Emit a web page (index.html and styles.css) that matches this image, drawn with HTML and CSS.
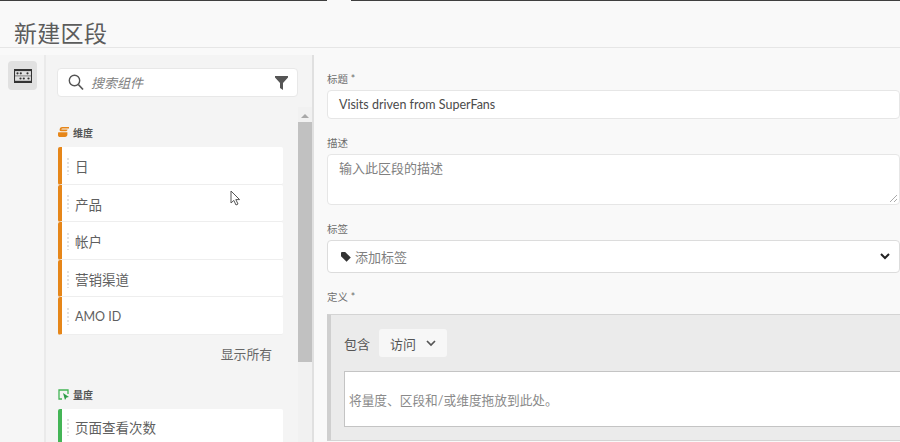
FILE: index.html
```html
<!DOCTYPE html>
<html lang="zh-CN">
<head>
  <meta charset="UTF-8">
  <title>新建区段</title>
  <meta name="viewport" content="width=device-width, initial-scale=1.0">
  <link rel="stylesheet" href="styles.css">
</head>
<body>

  <div class="topline"><span class="topline-gap"></span></div>

  <h1 class="page-title">新建区段</h1>

  <div class="main">

    <div class="rail">
      <div class="rail-btn">
        <svg width="18" height="14" viewBox="0 0 18 14">
          <rect x="0.5" y="0.5" width="17" height="13" fill="none" stroke="#333" stroke-width="1.1"/>
          <path d="M1 1.5H17" stroke="#333" stroke-width="1.2"/>
          <path d="M1 6.9H17" stroke="#555" stroke-width="0.7"/>
          <path d="M1 12.4H17" stroke="#333" stroke-width="1.2"/>
          <circle cx="3.5" cy="4.3" r="1.1" fill="#333"/>
          <circle cx="6.8" cy="4.3" r="1.1" fill="#333"/>
          <circle cx="13.5" cy="4.3" r="1.1" fill="#333"/>
          <circle cx="6.5" cy="9.5" r="1.1" fill="#333"/>
          <circle cx="9.8" cy="9.5" r="1.1" fill="#333"/>
          <circle cx="14.5" cy="9.5" r="1.1" fill="#333"/>
        </svg>
      </div>
    </div>

    <div class="panel">
      <div class="search">
        <svg class="search-icon" width="16" height="17" viewBox="0 0 16 17">
          <circle cx="6.5" cy="6.5" r="5.2" fill="none" stroke="#555" stroke-width="1.4"/>
          <path d="M10.3 10.5L15 15.5" stroke="#555" stroke-width="1.7"/>
        </svg>
        <span class="search-text">搜索组件</span>
        <svg class="filter-icon" width="13" height="14" viewBox="0 0 13 14">
          <path d="M0 0H13V1.5L8 7V14L5 12V7L0 1.5Z" fill="#555"/>
        </svg>
      </div>

      <div class="panel-body">
        <div class="list">
          <div class="group-label first">
            <svg width="11" height="10" viewBox="0 0 11 10">
              <path d="M4 0H11V1.4H4.5C3.8 1.4 3.4 1.8 3.3 2.4H9.6C9.4 3.6 8.6 4.2 7.4 4.2H3C1.6 4.2 1.4 3.2 1.8 1.8 2.1 .7 2.9 0 4 0Z" fill="#e68619"/>
              <path d="M1 5.2H9.4V7.6C9.4 9.2 8.4 10 7 10H2C.8 10 0 9.2 0 8.2V6.2C0 5.6.4 5.2 1 5.2Z" fill="#e68619"/>
            </svg>
            维度
          </div>
          <div class="cards">
            <div class="card orange"><span class="grip"></span>日</div>
            <div class="card orange"><span class="grip"></span>产品</div>
            <div class="card orange"><span class="grip"></span>帐户</div>
            <div class="card orange"><span class="grip"></span>营销渠道</div>
            <div class="card orange card-latin"><span class="grip"></span>AMO ID</div>
          </div>
          <div class="show-all">显示所有</div>
          <div class="group-label">
            <svg width="11" height="11" viewBox="0 0 11 11">
              <path d="M10 5V1H1V10H4" fill="none" stroke="#44b556" stroke-width="1.3"/>
              <path d="M5 4L11 8L8.5 8.5L7 11Z" fill="#2d9d48"/>
            </svg>
            量度
          </div>
          <div class="cards">
            <div class="card green"><span class="grip"></span>页面查看次数</div>
          </div>
        </div>

        <div class="scrollbar">
          <div class="scroll-arrow"></div>
          <div class="scroll-thumb"></div>
        </div>
      </div>

      <svg class="cursor" width="11" height="16" viewBox="0 0 11 16">
        <path d="M1 1V13L3.8 10.4L6 15L8 14L5.8 9.6H9.6Z" fill="#fff" stroke="#555" stroke-width="1"/>
      </svg>
    </div>

    <div class="form">
      <div class="label">标题 *</div>
      <div class="input title-input">Visits driven from SuperFans</div>

      <div class="label">描述</div>
      <div class="input desc-input">
        输入此区段的描述
        <svg class="resize" width="9" height="9" viewBox="0 0 9 9">
          <path d="M1 8L8 1M5 8L8 5" stroke="#aaa" stroke-width="1"/>
        </svg>
      </div>

      <div class="label">标签</div>
      <div class="input tag-input">
        <svg width="10" height="10" viewBox="0 0 10 10">
          <path d="M0 1V4.2L5.6 9.8L9.8 5.6L4.2 0H1Q0 0 0 1Z" fill="#333"/>
        </svg>
        <span>添加标签</span>
        <svg class="tag-chevron" width="10" height="7" viewBox="0 0 10 7">
          <path d="M1 1L5 5L9 1" fill="none" stroke="#222" stroke-width="2"/>
        </svg>
      </div>

      <div class="label label-def">定义 *</div>
      <div class="definition">
        <div class="def-head">
          包含
          <div class="def-select">
            访问
            <svg width="10" height="7" viewBox="0 0 10 7">
              <path d="M1 1L5 5L9 1" fill="none" stroke="#555" stroke-width="1.7"/>
            </svg>
          </div>
        </div>
        <div class="dropzone">将量度、区段和/或维度拖放到此处。</div>
      </div>
    </div>

  </div>

</body>
</html>
```

FILE: styles.css
```css
* {
  box-sizing: border-box;
}

html, body {
  height: 442px;
  margin: 0;
  overflow: hidden;
}

body {
  background: #f9f9f9;
  color: #4b4b4b;
  font-family: Lato, "Noto Sans CJK SC", sans-serif;
  font-size: 14px;
}

.topline {
  height: 1px;
  background: #3f3f3f;
  padding-left: 327px;
}

.topline-gap {
  display: block;
  width: 24px;
  height: 1px;
  background: #f9f9f9;
}

.page-title {
  height: 47px;
  margin: 0;
  padding: 16px 0 0 14px;
  border-bottom: 1px solid #e6e6e6;
  font-size: 23px;
  font-weight: 400;
  line-height: 32px;
  letter-spacing: 0.3px;
  color: #5c5c5c;
}

.main {
  display: flex;
  height: 394px;
  padding-top: 7px;
}

.rail {
  width: 46px;
  padding: 6px 0 0 8px;
  background: #f6f6f6;
  border-right: 2px solid #eaeaea;
}

.rail-btn {
  display: flex;
  align-items: center;
  justify-content: center;
  width: 29px;
  height: 29px;
  background: #e1e1e1;
  border-radius: 4px;
}

.panel {
  position: relative;
  width: 268px;
  padding-top: 13px;
  overflow: hidden;
  background: #f4f4f4;
  border-right: 2px solid #e0e0e0;
}

.search {
  display: flex;
  align-items: center;
  width: 241px;
  height: 29px;
  margin-left: 11px;
  padding: 0 9px 0 10px;
  background: #fff;
  border: 1px solid #e8e8e8;
  border-radius: 4px;
}

.search-text {
  flex: 1;
  margin-left: 7px;
  font-size: 13px;
  line-height: 18px;
  font-style: italic;
  color: #808080;
}

.panel-body {
  display: flex;
  margin-top: 10px;
}

.list {
  width: 252px;
  padding: 18px 0 0 12px;
}

.group-label {
  display: flex;
  align-items: center;
  gap: 4px;
  height: 14px;
  margin-top: 25px;
  font-size: 10px;
  font-weight: 700;
  color: #555;
}

.group-label.first {
  margin-top: 0;
  margin-bottom: 8px;
}

.cards {
  width: 225px;
  margin-top: 7px;
}

.group-label.first + .cards {
  margin-top: 0;
}

.card {
  display: flex;
  align-items: center;
  height: 37.6px;
  padding: 2px 0 0 4px;
  background: #fff;
  border-bottom: 1px solid #eeeeee;
  border-left: 4px solid #e68619;
  border-radius: 2px;
  font-size: 13.5px;
  color: #5f5f5f;
}

.card-latin {
  font-size: 12.5px;
}

.card.green {
  height: 38px;
  padding-top: 0;
  border-left-color: #44b556;
}

.grip {
  width: 2px;
  height: 17px;
  margin: 0 6px 0 1px;
  background: repeating-linear-gradient(#e2e2e2 0 2px, transparent 2px 4px);
}

.show-all {
  width: 214px;
  margin-top: 10px;
  font-size: 12.8px;
  line-height: 18px;
  text-align: right;
  color: #666;
}

.scrollbar {
  width: 14px;
  height: 340px;
  background: #f1f1f1;
}

.scroll-arrow {
  width: 0;
  height: 0;
  margin: 7px auto 4px;
  border-right: 4px solid transparent;
  border-bottom: 4px solid #a8a8a8;
  border-left: 4px solid transparent;
}

.scroll-thumb {
  height: 240px;
  background: #c1c1c1;
}

.cursor {
  position: absolute;
  top: 135px;
  left: 184px;
}

.form {
  flex: 1;
  min-width: 0;
  padding: 17px 0 0 13px;
}

.label {
  height: 14px;
  margin-bottom: 4px;
  font-size: 10.5px;
  line-height: 14px;
  color: #6e6e6e;
}

.label-def {
  margin-bottom: 10px;
}

.input {
  position: relative;
  background: #fff;
  border: 1px solid #e6e6e6;
  border-radius: 4px;
  font-size: 12.5px;
  color: #4b4b4b;
}

.title-input {
  display: flex;
  align-items: center;
  height: 29px;
  margin-bottom: 17px;
  padding-left: 11px;
}

.desc-input {
  height: 51px;
  margin-bottom: 17px;
  padding: 4px 0 0 11px;
  font-size: 13px;
  line-height: 18px;
  color: #808080;
}

.resize {
  position: absolute;
  right: 1px;
  bottom: 1px;
}

.tag-input {
  display: flex;
  align-items: center;
  gap: 4px;
  height: 33px;
  margin-bottom: 17px;
  padding: 0 9px 0 13px;
  border-color: #dcdcdc;
  font-size: 13px;
  color: #808080;
}

.tag-input span {
  flex: 1;
}

.definition {
  height: 127px;
  padding: 14px 0 0 13px;
  background: #ebebeb;
  border-top: 1px solid #d4d4d4;
  border-bottom: 1px solid #d4d4d4;
  border-left: 4px solid #cfcfcf;
}

.def-head {
  display: flex;
  align-items: center;
  gap: 9px;
  height: 28px;
  font-size: 13px;
  color: #555;
}

.def-select {
  display: flex;
  align-items: center;
  gap: 10px;
  height: 28px;
  padding: 0 11px;
  background: #f7f7f7;
  border-radius: 3px;
}

.dropzone {
  display: flex;
  align-items: center;
  height: 56px;
  margin-top: 14px;
  padding-left: 4px;
  background: #fff;
  border: 1px solid #c4c4c4;
  border-right: none;
  font-size: 12.7px;
  color: #8a8a8a;
}
```
